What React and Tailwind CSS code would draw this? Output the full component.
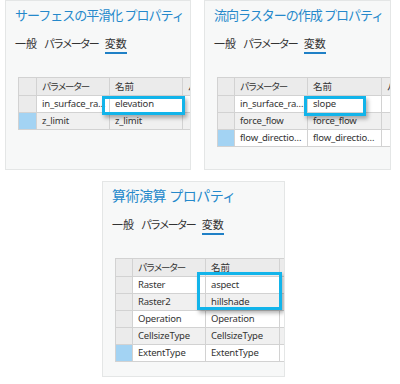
import React from 'react';

const panels = [
    {
        title: 'サーフェスの平滑化 プロパティ',
        titleCls: 'text-[13px] tracking-[-1px]',
        rows: [['in_surface_ra…', 'elevation'], ['z_limit', 'z_limit']],
        box: 'left-[84px] top-[19px] w-[83px] h-[19px]',
        cols: 'grid-cols-[18px_73px_73px_60px]',
        size: 'w-[186px] h-[170px]',
    },
    {
        title: '流向ラスターの作成 プロパティ',
        titleCls: 'text-[13px] tracking-[-1px]',
        rows: [['in_surface_ra…', 'slope'], ['force_flow', 'force_flow'], ['flow_directio…', 'flow_directio…']],
        box: 'left-[87px] top-[19px] w-[62px] h-[20px]',
        cols: 'grid-cols-[17px_73px_74px_60px]',
        size: 'w-[187px] h-[170px]',
    },
    {
        title: '算術演算 プロパティ',
        titleCls: 'text-[14px] tracking-[-0.5px]',
        rows: [['Raster', 'aspect'], ['Raster2', 'hillshade'], ['Operation', 'Operation'], ['CellsizeType', 'CellsizeType'], ['ExtentType', 'ExtentType']],
        box: 'left-[82px] top-[14px] w-[85px] h-[38px]',
        cols: 'grid-cols-[17px_73px_74px_60px]',
        size: 'w-[183px] h-[196px]',
    },
];

function Panel({ p }) {
    return (
        <div className={`${p.size} bg-[#f7f8f8] border border-[#e4e6e6] overflow-hidden pl-[9px] font-['Noto_Sans','Noto_Sans_CJK_JP',sans-serif]`}>
            <div className={`mt-[4px] h-[20px] leading-[20px] ${p.titleCls} text-[#2589cb] whitespace-nowrap`}>{p.title}</div>
            <div className="mt-[11px] flex gap-[7px] text-[11px] leading-[16px] text-[#333]">
                <span>一般</span>
                <span className="tracking-[-2px]">パラメーター</span>
                <span className="border-b-2 border-[#1f80c6]">変数</span>
            </div>
            <div className="relative mt-[23px] ml-[3px] w-[260px]">
                <div className={`grid ${p.cols} border-l border-t border-[#d2d2d2] text-[#333]`}>
                    <div className="h-[18px] bg-[#ebebeb] border-b border-r border-[#d2d2d2]" />
                    <div className="h-[18px] bg-[#ebebeb] border-b border-r border-[#d2d2d2] pl-[5px] text-[9.5px] tracking-[-1.7px] leading-[18px] whitespace-nowrap">パラメーター</div>
                    <div className="h-[18px] bg-[#ebebeb] border-b border-r border-[#d2d2d2] pl-[5px] text-[9.5px] leading-[18px]">名前</div>
                    <div className="h-[18px] bg-[#ebebeb] border-b border-[#d2d2d2] pl-[5px] text-[9.5px] leading-[18px]">パス</div>
                    {p.rows.map((r, i) => {
                        const last = i === p.rows.length - 1;
                        const bg = i % 2 === 0 ? 'bg-white' : 'bg-[#f0f0f0]';
                        return (
                            <React.Fragment key={i}>
                                <div className={`h-[17px] border-b border-r border-[#d2d2d2] ${last ? 'bg-[#a3d3f3]' : 'bg-[#ebebeb]'}`} />
                                <div className={`h-[17px] ${bg} border-b border-r border-[#d2d2d2] pl-[5px] text-[9.5px] tracking-[-0.2px] leading-[16px] whitespace-nowrap overflow-hidden`}>{r[0]}</div>
                                <div className={`h-[17px] ${bg} border-b border-r border-[#d2d2d2] pl-[5px] text-[9.5px] tracking-[-0.2px] leading-[16px] whitespace-nowrap overflow-hidden`}>{r[1]}</div>
                                <div className={`h-[17px] ${bg} border-b border-[#d2d2d2]`} />
                            </React.Fragment>
                        );
                    })}
                </div>
                <div className={`absolute ${p.box} border-[3px] border-[#12b4ea] shadow-[2px_3px_4px_rgba(0,0,0,0.3)]`} />
            </div>
        </div>
    );
}

export default function App() {
    return (
        <div className="w-[400px] h-[384px] bg-white overflow-hidden">
            <div className="flex gap-[13px] pl-[5px]">
                <Panel p={panels[0]} />
                <Panel p={panels[1]} />
            </div>
            <div className="mt-[11px] pl-[102px]">
                <Panel p={panels[2]} />
            </div>
        </div>
    );
}
